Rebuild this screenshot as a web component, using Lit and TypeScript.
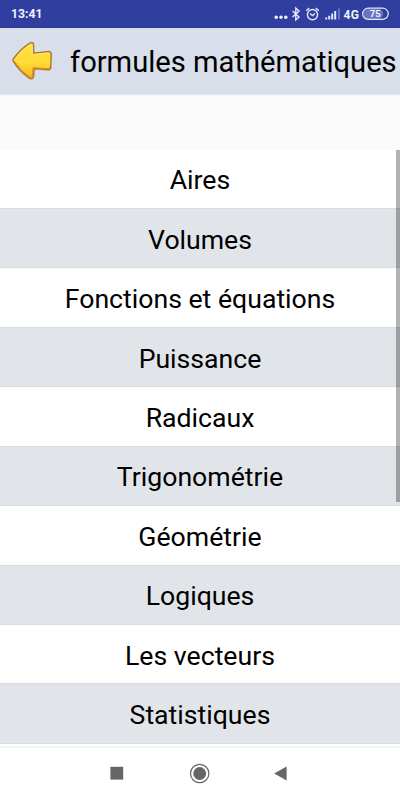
import { LitElement, html, css } from "lit";
import { customElement } from "lit/decorators.js";

const TOPICS = [
  "Aires", "Volumes", "Fonctions et équations", "Puissance", "Radicaux",
  "Trigonométrie", "Géométrie", "Logiques", "Les vecteurs", "Statistiques",
];

@customElement("status-bar")
class StatusBar extends LitElement {
  static styles = css`
    :host { display: flex; box-sizing: border-box; height: 27.5px; flex: none; padding: 2px 11px 0 11px;
      align-items: center; justify-content: space-between; background: #303e9f; color: #f0f2fc;
      border-bottom: 1px solid #2b3995; }
    .time { font-size: 12.2px; font-weight: 700; line-height: 15px; }
    .icons { display: block; width: 116px; height: 20px; }
    text { font-family: Roboto, sans-serif; font-weight: 700; fill: #f0f2fc; }
  `;
  render() {
    return html`
      <span class="time">13:41</span>
      <svg class="icons" viewBox="273 4 116 20" fill="none" stroke="#e4e8fb">
        <g fill="#f0f2fc" stroke="none">
          <circle cx="276.2" cy="17.2" r="1.7" /><circle cx="281" cy="17.2" r="1.7" /><circle cx="285.8" cy="17.2" r="1.7" />
        </g>
        <path d="M292.6 11l6.4 6-3.2 2.9V8.1l3.2 2.9-6.4 6" stroke-width="1.4" />
        <circle cx="312.5" cy="14.6" r="5.1" stroke-width="1.4" />
        <path d="M310 13.5l2.5 2 2.5-2M306.2 10.7l3-2.6M318.8 10.7l-3-2.6" stroke-width="1.4" />
        <path d="M326.2 17.5v2M329.2 15.8v3.7M332.2 13.5v6M335.2 11v8.5" stroke-width="2" />
        <path d="M338.9 8.5v11" stroke="#6a76c4" stroke-width="1.9" />
        <text x="343.5" y="18.8" font-size="12" stroke="none" textLength="15.5">4G</text>
        <path d="M368.5 8.7h9.5a5.2 5.2 0 0 1 0 10.4h-9.5a5.2 5.2 0 0 1 0-10.4z" fill="#6974c1" stroke="none" />
        <rect x="362.6" y="8.2" width="25.6" height="11.2" rx="5.6" stroke-width="1.2" />
        <text x="375.2" y="17.4" font-size="9.5" text-anchor="middle" stroke="none">75</text>
      </svg>`;
  }
}

@customElement("app-header")
class AppHeader extends LitElement {
  static styles = css`
    :host { display: flex; box-sizing: border-box; height: 67px; flex: none; align-items: center;
      padding-left: 11px; background: #d8deea; border-bottom: 1px solid #e3e6ee; }
    .back { flex: none; width: 42px; height: 40px; margin-top: 1px; }
    .title { margin-left: 17px; font-size: 29.15px; line-height: 34px; white-space: nowrap; margin-top: 3px; }
  `;
  render() {
    return html`
      <svg class="back" viewBox="11 41 42 40">
        <defs>
          <linearGradient id="gold" x1="0" y1="0" x2="0" y2="1">
            <stop offset="0" stop-color="#ffdf45" /><stop offset=".55" stop-color="#ffdc35" /><stop offset="1" stop-color="#f9b51c" />
          </linearGradient>
        </defs>
        <path d="M13.2 61.1Q12.4 60 13.4 58.7Q20.7 48.8 29.9 43.2Q33.3 41.5 33.6 44.5V53.2L48.3 51.6Q51 51.5 51.2 54L50.7 67.6Q50.4 70.2 47.7 69.8L34.2 68.8L33.5 76.6Q32.8 79.8 29.6 78.4Q19.7 71.6 13.2 61.1Z"
          fill="url(#gold)" stroke="#b07a38" stroke-width="1.5" stroke-linejoin="round" />
        <path d="M14.4 61.2Q20.5 71.1 30.2 77.2Q32 77.7 32.3 76L33.1 67.7L48 68.6Q49.4 68.6 49.6 67.2" fill="none" stroke="#dc8f18" stroke-width="1" />
        <path d="M14.9 59.5Q22 50 30.5 44.8Q32 44.2 32.2 45.7V54.6L48.3 53.1" fill="none" stroke="#ffec70" stroke-width=".8" />
      </svg>
      <span class="title">formules mathématiques</span>`;
  }
}

@customElement("topic-list")
class TopicList extends LitElement {
  static styles = css`
    :host { display: flex; flex-direction: column; position: relative; height: 594.3px; flex: none; }
    .row { flex: 1 1 0; display: flex; align-items: center; justify-content: center; box-sizing: border-box;
      padding-top: 3px; font-size: 26.65px; line-height: 30px; background: #fff; border-bottom: 1px solid #dadcdd; }
    .row:nth-child(even) { background: #e1e5ea; }
    .thumb { position: absolute; right: 0; top: 0; width: 4px; height: 352px; background: rgba(0, 0, 0, .3); }
  `;
  render() {
    return html`${TOPICS.map((t) => html`<div class="row">${t}</div>`)}<div class="thumb"></div>`;
  }
}

@customElement("nav-bar")
class NavBar extends LitElement {
  static styles = css`
    :host { display: flex; flex: 1; align-items: center; justify-content: space-between; padding: 0 110px 0 109px;
      margin-top: 2px; border-top: 2px solid #f5f5f5; background: #fff; }
    svg { width: 22px; height: 22px; margin-top: -1px; fill: #666; }
    .ring { fill: none; stroke: #666; stroke-width: 1.2; }
  `;
  render() {
    return html`
      <svg viewBox="0 0 22 22"><rect x="1.4" y="4.8" width="12.8" height="12.8" /></svg>
      <svg viewBox="0 0 22 22"><circle cx="10.7" cy="11.5" r="6.4" /><circle class="ring" cx="10.7" cy="11.5" r="9.2" /></svg>
      <svg viewBox="0 0 22 22"><path d="M6.2 11.5L18.6 4.4v14.2z" /></svg>`;
  }
}

@customElement("app-root")
class AppRoot extends LitElement {
  static styles = css`
    :host { display: flex; flex-direction: column; width: 400px; height: 800px; overflow: hidden;
      background: #fff; color: #000; font-family: Roboto, sans-serif; }
    .gap { flex: none; height: 55px; background: #fafafa; }
  `;
  render() {
    return html`
      <status-bar></status-bar>
      <app-header></app-header>
      <div class="gap"></div>
      <topic-list></topic-list>
      <nav-bar></nav-bar>`;
  }
}
